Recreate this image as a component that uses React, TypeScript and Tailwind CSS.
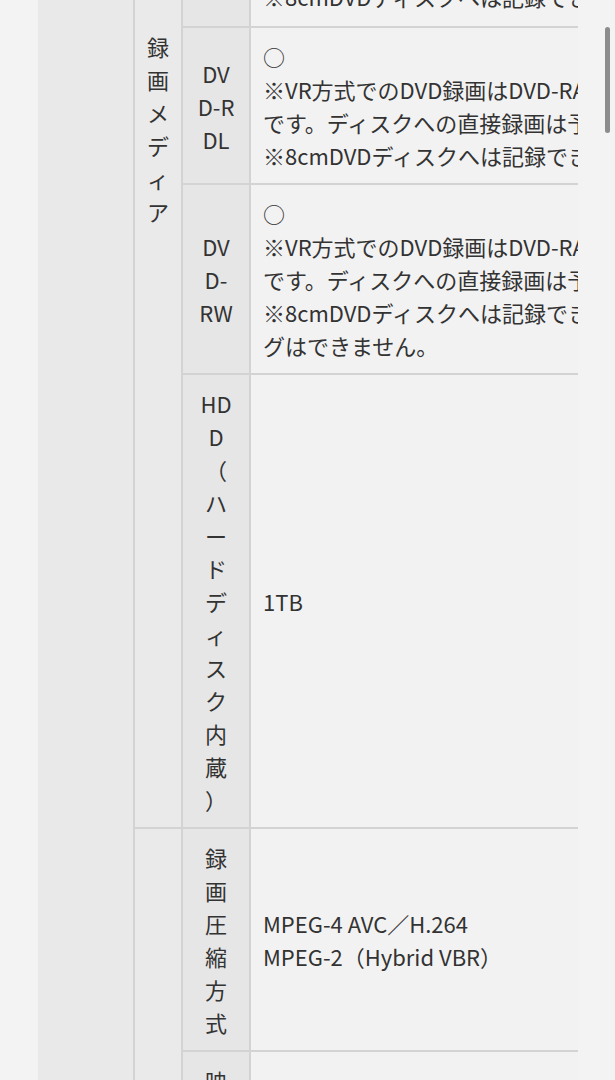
import React from 'react';

const font = { fontFamily: '"Noto Sans CJK JP", "Noto Sans", sans-serif' };

type Row = {
  label: string;
  lines: string[];
  center?: boolean;
};

const mediaRows: Row[] = [
  {
    label: 'DVD-R DL',
    lines: [
      '○',
      '※VR方式でのDVD録画はDVD-RAMのみ対応',
      'です。ディスクへの直接録画は予約録画のみ',
      '※8cmDVDディスクへは記録できません。',
    ],
  },
  {
    label: 'DVD-RW',
    lines: [
      '○',
      '※VR方式でのDVD録画はDVD-RAMのみ対応',
      'です。ディスクへの直接録画は予約録画のみ',
      '※8cmDVDディスクへは記録できません。また、ダビン',
      'グはできません。',
    ],
  },
  {
    label: 'HDD（ハードディスク内蔵）',
    lines: ['1TB'],
    center: true,
  },
];

const codecRows: Row[] = [
  {
    label: '録画圧縮方式',
    lines: ['MPEG-4 AVC／H.264', 'MPEG-2（Hybrid VBR）'],
    center: true,
  },
  {
    label: '映像入力端子',
    lines: ['S映像入力、映像入力'],
    center: true,
  },
];

function SpecRow({ row, last }: { row: Row; last?: boolean }) {
  return (
    <div className={'flex ' + (last ? '' : 'border-b-2 border-[#d3d3d3]')}>
      <div className="w-[68px] shrink-0 bg-[#e6e6e6] border-r-2 border-[#d3d3d3] px-[12px] pt-[12px] pb-[11px] flex items-center justify-center">
        <div className="w-full text-center break-words [text-spacing-trim:space-all]">{row.label}</div>
      </div>
      <div
        className={
          'w-[700px] shrink-0 bg-[#f2f2f2] pl-[12px] pt-[12px] pb-[11px] flex ' +
          (row.center ? 'items-center' : 'items-start')
        }
      >
        <div className="whitespace-nowrap">
          {row.lines.map((l, i) => (
            <div key={i}>{l}</div>
          ))}
        </div>
      </div>
    </div>
  );
}

export default function App() {
  return (
    <div
      className="relative min-h-screen bg-[#f3f3f3] flex text-[22px] leading-[33px] text-[#333333]"
      style={font}
    >
      <div className="w-[38px] shrink-0" />
      <div className="w-[540px] shrink-0 overflow-hidden flex">
        {/* category column, its label sits above the fold */}
        <div className="w-[97px] shrink-0 bg-[#e9e9e9] border-r-2 border-[#d3d3d3]" />

        <div className="flex flex-col">
          <div className="flex border-b-2 border-[#d3d3d3]">
            <div className="w-[48px] shrink-0 bg-[#eaeaea] border-r-2 border-[#d3d3d3] px-[12px] pt-[30px] text-center break-words">
              録画メディア
            </div>
            <div className="flex flex-col">
              {/* row cut off by the scroll position */}
              <div className="flex h-[28px] border-b-2 border-[#d3d3d3]">
                <div className="w-[68px] shrink-0 bg-[#e6e6e6] border-r-2 border-[#d3d3d3]" />
                <div className="w-[700px] shrink-0 bg-[#f2f2f2] pl-[12px] overflow-hidden flex items-end">
                  <div className="whitespace-nowrap mb-[13px]">※8cmDVDディスクへは記録できません。</div>
                </div>
              </div>
              {mediaRows.map((r, i) => (
                <SpecRow key={r.label} row={r} last={i === mediaRows.length - 1} />
              ))}
            </div>
          </div>

          <div className="flex">
            <div className="w-[48px] shrink-0 bg-[#eaeaea] border-r-2 border-[#d3d3d3]" />
            <div className="flex flex-col">
              {codecRows.map((r) => (
                <SpecRow key={r.label} row={r} />
              ))}
            </div>
          </div>
        </div>
      </div>

      {/* scroll indicator */}
      <div className="absolute right-[5px] top-[27px] w-[5px] h-[106px] rounded-full bg-[#8c8c8c]" />
    </div>
  );
}
